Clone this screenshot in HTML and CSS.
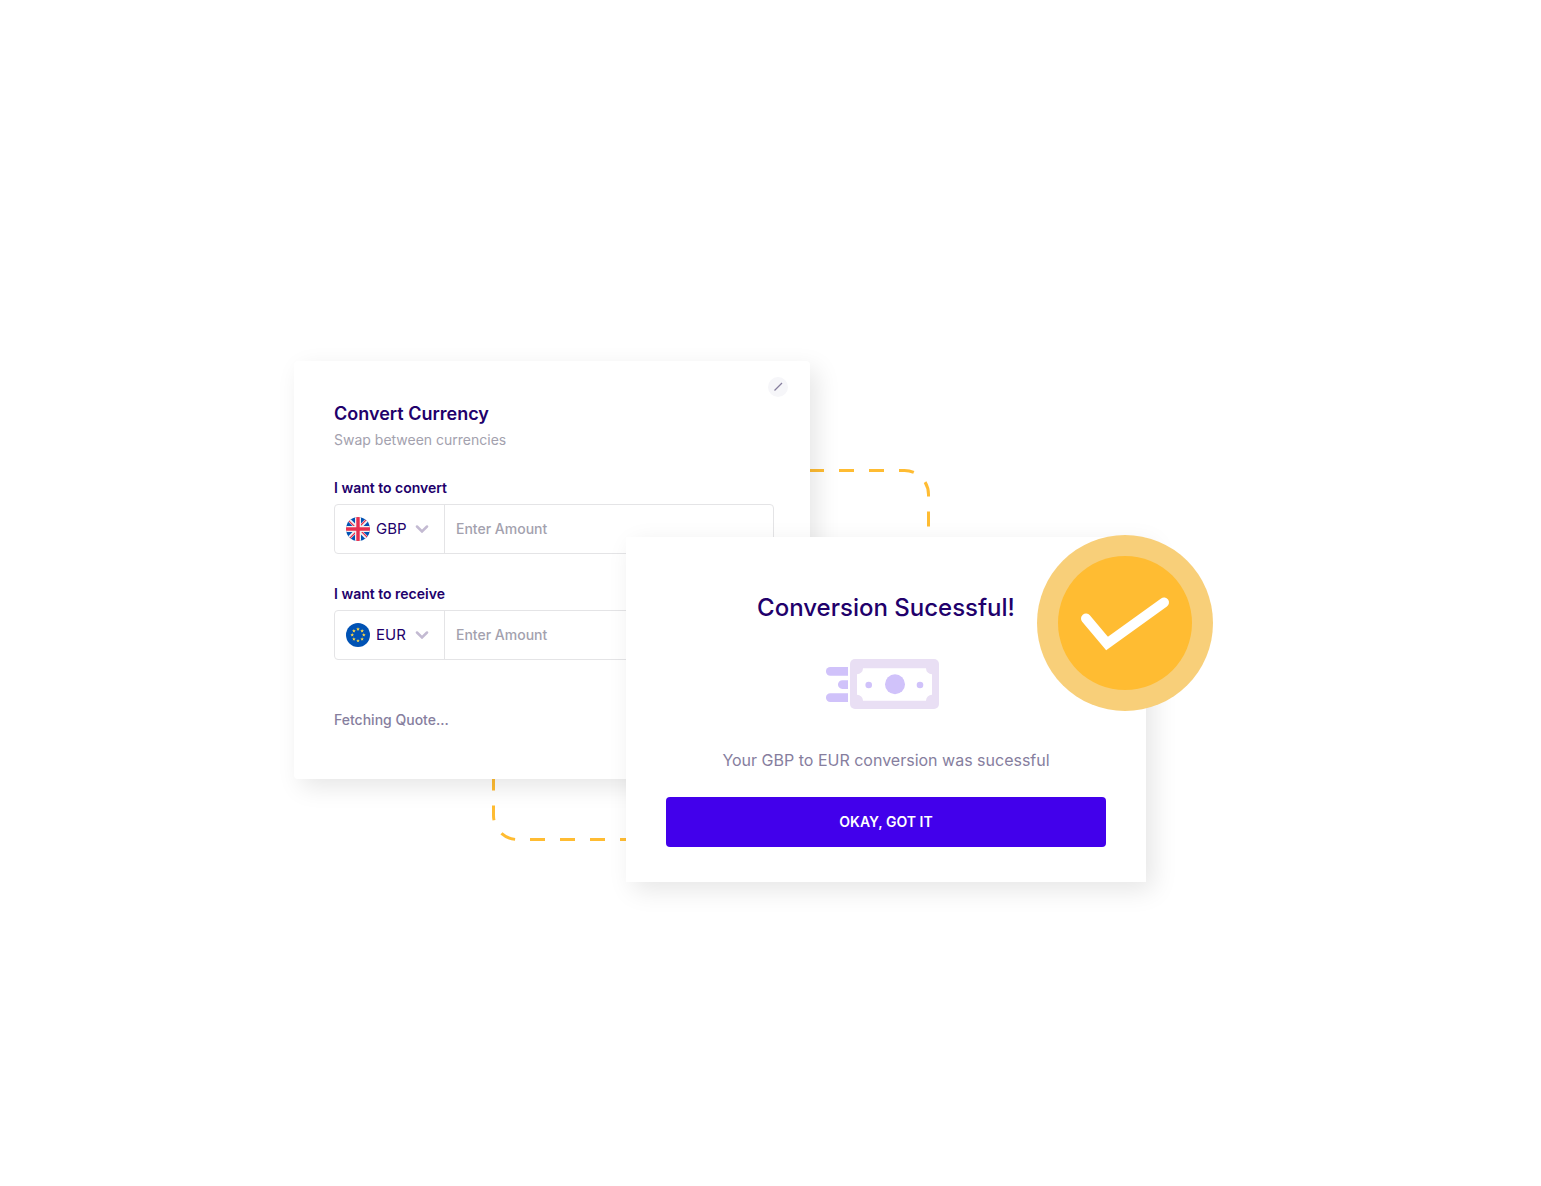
FILE: index.html
```html
<!DOCTYPE html>
<html lang="en">

<head>
    <meta charset="UTF-8">
    <meta name="viewport" content="width=device-width, initial-scale=1.0">
    <title>Convert Currency</title>
    <link rel="stylesheet" href="styles.css">
</head>

<body>
    <main class="stage">
        <svg class="connector connector-top" width="122" height="70" viewBox="0 0 122 70" aria-hidden="true">
            <path d="M-1 1.5H94.5A24 24 0 0 1 118.5 25.5V70" />
        </svg>
        <svg class="connector connector-bottom" width="134" height="72" viewBox="0 0 134 72" aria-hidden="true">
            <path d="M143 69.5H25.5A24 24 0 0 1 1.5 45.5V0" />
        </svg>

        <!-- Convert form -->
        <section class="card convert-card">
            <button class="close-btn" type="button" aria-label="Close">
                <svg width="20" height="20" viewBox="0 0 20 20">
                    <path d="M6.5 13.5L14 6" />
                </svg>
            </button>
            <h1>Convert Currency</h1>
            <p class="subtitle">Swap between currencies</p>

            <form>
                <div class="field">
                    <label for="convertAmount">I want to convert</label>
                    <div class="amount-box">
                        <div class="currency">
                            <svg class="flag" width="24" height="24" viewBox="0 0 24 24" aria-hidden="true">
                                <clipPath id="flagClip">
                                    <circle cx="12" cy="12" r="12" />
                                </clipPath>
                                <g clip-path="url(#flagClip)">
                                    <rect width="24" height="24" fill="#0052b4" />
                                    <path d="M0 0L24 24M24 0L0 24" stroke="#f0f0f0" stroke-width="3.6" />
                                    <path d="M0 1L11 12M24 23L13 12M23 0L12 11M1 24L12 13" stroke="#e8304f" stroke-width="1.2" />
                                    <path d="M12 0V24M0 12H24" stroke="#f0f0f0" stroke-width="6" />
                                    <path d="M12 0V24M0 12H24" stroke="#e8304f" stroke-width="3.4" />
                                </g>
                            </svg>
                            <select aria-label="Currency to convert">
                                <option>GBP</option>
                                <option>EUR</option>
                            </select>
                            <svg class="chevron" width="14" height="8" viewBox="0 0 14 8" aria-hidden="true">
                                <path d="M2 1.5L7 6.5L12 1.5" />
                            </svg>
                        </div>
                        <input id="convertAmount" type="text" placeholder="Enter Amount">
                    </div>
                </div>

                <div class="field">
                    <label for="receiveAmount">I want to receive</label>
                    <div class="amount-box">
                        <div class="currency">
                            <svg class="flag" width="24" height="24" viewBox="0 0 24 24" aria-hidden="true">
                                <defs>
                                    <path id="star" fill="#ffda44" d="M0 -1.9L.5 -.65L1.8 -.6L.8 .25L1.15 1.5L0 .8L-1.15 1.5L-.8 .25L-1.8 -.6L-.5 -.65Z" />
                                </defs>
                                <circle cx="12" cy="12" r="12" fill="#0052b4" />
                                <use href="#star" x="12" y="6.2" />
                                <use href="#star" x="16.1" y="7.9" />
                                <use href="#star" x="17.8" y="12" />
                                <use href="#star" x="16.1" y="16.1" />
                                <use href="#star" x="12" y="17.8" />
                                <use href="#star" x="7.9" y="16.1" />
                                <use href="#star" x="6.2" y="12" />
                                <use href="#star" x="7.9" y="7.9" />
                            </svg>
                            <select aria-label="Currency to receive">
                                <option>EUR</option>
                                <option>GBP</option>
                            </select>
                            <svg class="chevron" width="14" height="8" viewBox="0 0 14 8" aria-hidden="true">
                                <path d="M2 1.5L7 6.5L12 1.5" />
                            </svg>
                        </div>
                        <input id="receiveAmount" type="text" placeholder="Enter Amount">
                    </div>
                </div>
            </form>

            <p class="quote">Fetching Quote...</p>
        </section>

        <!-- Success message -->
        <section class="card success-card">
            <h2>Conversion Sucessful!</h2>
            <svg class="money" width="120" height="50" viewBox="0 0 120 50" aria-hidden="true">
                <g fill="#d0c2fa">
                    <path d="M22 8V16.7H4.3A4.3 4.3 0 0 1 4.3 8Z" />
                    <path d="M22 21.2V29.9H16.3A4.3 4.3 0 0 1 16.3 21.2Z" />
                    <path d="M22 34.3V43H4.3A4.3 4.3 0 0 1 4.3 34.3Z" />
                </g>
                <rect x="24" width="89" height="50" rx="5" fill="#e9dff4" />
                <path fill="#fff" d="M37 9.3H100A6 6 0 0 0 106 15.3V35.7A6 6 0 0 0 100 41.7H37A6 6 0 0 0 31 35.7V15.3A6 6 0 0 0 37 9.3Z" />
                <g fill="#d0c2fa">
                    <circle cx="69" cy="25.3" r="10" />
                    <circle cx="42.7" cy="26" r="3.3" />
                    <circle cx="94" cy="26" r="3.3" />
                </g>
            </svg>
            <p class="message">Your GBP to EUR conversion was sucessful</p>
            <button class="ok-btn" type="button">OKAY, GOT IT</button>

            <svg class="badge" width="176" height="176" viewBox="0 0 176 176" aria-hidden="true">
                <circle cx="88" cy="88" r="88" fill="#f8cf79" />
                <circle cx="88" cy="88" r="67" fill="#ffbc32" />
                <path d="M49 83.5L70 108.5L127 67.5" />
            </svg>
        </section>
    </main>
</body>

</html>
```

FILE: styles.css
```css
:root {
    --primary-color: #4200eb;
    --title-color: #21006b;
    --text-color: #867e9e;
    --muted-color: #a3a1ae;
    --border-color: #e4e4e6;
    --accent-color: #ffbc32;
}

* {
    box-sizing: border-box;
}

body {
    display: flex;
    align-items: center;
    justify-content: center;
    min-height: 100vh;
    margin: 0;
    padding-top: 57px;
    font-family: Inter, 'Liberation Sans', sans-serif;
    font-size: 14px;
    line-height: 20px;
    color: var(--text-color);
    background-color: #fff;
}

h1,
h2,
p {
    margin: 0;
}

/* The cards share one row and overlap in the second column */
.stage {
    display: grid;
    grid-template-columns: 332fr 184fr 336fr 101fr;
    align-items: start;
    width: 100%;
    max-width: 953px;
}

.card {
    position: relative;
    grid-row: 1;
    background-color: #fff;
    box-shadow: 7px 8px 24px rgba(0, 0, 0, 0.1);
}

.connector {
    grid-row: 1;
    overflow: visible;
    fill: none;
    stroke: var(--accent-color);
    stroke-width: 3;
    stroke-dasharray: 15 15;
}

.connector-top {
    grid-column: 3;
    margin-top: 108px;
}

.connector-bottom {
    grid-column: 1;
    justify-self: end;
    margin-top: 409px;
}

/* Convert form */
.convert-card {
    grid-column: 1 / 3;
    padding: 40px 36px 49px 40px;
    border-radius: 4px;
}

.close-btn {
    position: absolute;
    top: 16px;
    right: 22px;
    width: 20px;
    height: 20px;
    padding: 0;
    border: none;
    border-radius: 50%;
    background-color: #f6f6f9;
    cursor: pointer;
}

.close-btn svg {
    display: block;
    stroke: #867e9e;
    stroke-width: 1.3;
}

h1 {
    font-size: 18px;
    line-height: 26px;
    font-weight: 600;
    color: var(--title-color);
}

.subtitle {
    margin: 3px 0 28px;
    color: var(--muted-color);
}

.field {
    margin-bottom: 30px;
}

.field label {
    display: block;
    margin-bottom: 6px;
    font-weight: 600;
    color: var(--title-color);
}

.amount-box {
    display: flex;
    height: 50px;
    border: 1px solid var(--border-color);
    border-radius: 4px;
}

.currency {
    position: relative;
    display: flex;
    align-items: center;
    width: 110px;
    padding-left: 11px;
    border-right: 1px solid var(--border-color);
}

.flag {
    flex: none;
}

.currency select {
    width: 70px;
    height: 100%;
    padding: 0 0 0 6px;
    border: none;
    appearance: none;
    background: transparent;
    font: inherit;
    font-size: 15px;
    color: var(--title-color);
    cursor: pointer;
}

.chevron {
    position: absolute;
    right: 15px;
    pointer-events: none;
    fill: none;
    stroke: #c3bad2;
    stroke-width: 2.5;
    stroke-linecap: round;
}

.amount-box input {
    flex: 1;
    min-width: 0;
    padding: 0 11px;
    border: none;
    background: transparent;
    font: inherit;
    font-weight: 500;
    color: var(--title-color);
}

.amount-box input::placeholder {
    color: var(--muted-color);
    opacity: 1;
}

.quote {
    margin-top: 50px;
    font-weight: 500;
}

/* Success message */
.success-card {
    grid-column: 2 / 4;
    display: flex;
    flex-direction: column;
    align-items: center;
    margin-top: 176px;
    padding: 55px 40px 35px;
}

h2 {
    font-size: 24px;
    line-height: 32px;
    font-weight: 500;
    color: var(--title-color);
}

.money {
    margin: 35px 0 39px;
}

.message {
    margin-bottom: 25px;
    font-size: 16px;
    line-height: 24px;
}

.ok-btn {
    width: 100%;
    height: 50px;
    border: none;
    border-radius: 4px;
    background-color: var(--primary-color);
    font: inherit;
    font-weight: 600;
    color: #fff;
    cursor: pointer;
}

.badge {
    position: absolute;
    top: -2px;
    right: -67px;
    fill: none;
    stroke-linecap: round;
}

.badge path {
    stroke: #fff;
    stroke-width: 10;
}
```
